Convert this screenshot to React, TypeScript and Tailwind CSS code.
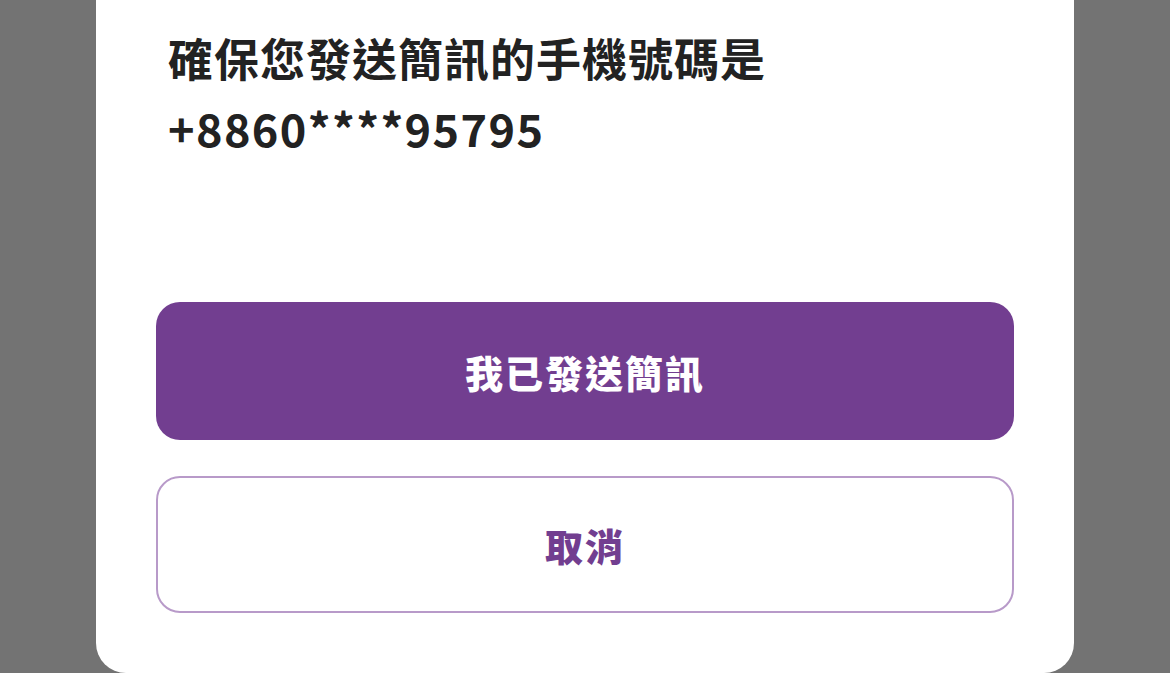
export default function App() {
  return (
    <div className="h-[673px] w-[1170px] overflow-hidden bg-[#737373] px-[96px] font-['Noto_Sans_CJK_TC',sans-serif]">
      <div className="-mt-[40px] flex h-[713px] flex-col rounded-b-[30px] bg-white px-[60px]">
        <div className="pl-[12px] pt-[63px] text-[45px] font-semibold leading-[70px] text-[#222222]">
          <p className="tracking-[1px]">確保您發送簡訊的手機號碼是</p>
          <p className="tracking-[1.4px]">+8860****95795</p>
        </div>

        <button className="mt-[139px] flex h-[138px] w-full items-center justify-center rounded-[24px] bg-[#723e90] text-[38px] font-black tracking-[2px] text-white">
          我已發送簡訊
        </button>
        <button className="mt-[36px] flex h-[137px] w-full items-center justify-center rounded-[24px] border-2 border-[#b89ac9] bg-white text-[38px] font-black tracking-[2px] text-[#723e90]">
          取消
        </button>
      </div>
    </div>
  );
}
